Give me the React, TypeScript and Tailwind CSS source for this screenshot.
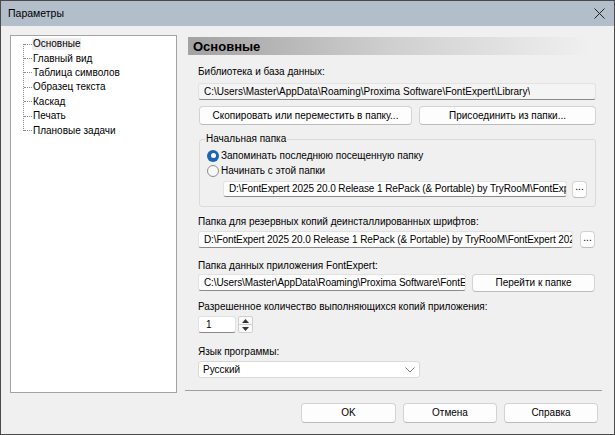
import React from "react";

const font = { fontFamily: '"Liberation Sans", Arial, sans-serif' };

function Btn({ children, className = "" }: { children: React.ReactNode; className?: string }) {
  return (
    <div
      className={
        "flex items-center justify-center rounded-[4px] border border-[#d3d3d3] border-b-[#bcbcbc] bg-[#fdfdfd] text-[10px] leading-none " +
        className
      }
    >
      {children}
    </div>
  );
}

function Field({ children, className = "" }: { children: React.ReactNode; className?: string }) {
  return (
    <div
      className={
        "flex items-center overflow-hidden whitespace-nowrap rounded-[3px] border border-[#e2e2e2] border-b-[#8a8a8a] pl-[5px] text-[10px] leading-none " +
        className
      }
    >
      <span className="overflow-hidden">{children}</span>
    </div>
  );
}

const treeItems = [
  "Основные",
  "Главный вид",
  "Таблица символов",
  "Образец текста",
  "Каскад",
  "Печать",
  "Плановые задачи",
];

export default function App() {
  return (
    <div
      className="flex h-[435px] w-[615px] flex-col border border-[#4a4a4a] bg-[#f0f0f0] text-[10px] text-black"
      style={font}
    >
      {/* title bar */}
      <div className="flex h-[25px] shrink-0 items-center justify-between bg-[#b2bec9] pl-[7px] pr-[9px]">
        <span className="text-[10.5px] leading-none">Параметры</span>
        <svg width="11" height="11" viewBox="0 0 11 11">
          <path d="M0.5 0.5 L10.5 10.5 M10.5 0.5 L0.5 10.5" stroke="#222" strokeWidth="1" />
        </svg>
      </div>

      <div className="flex flex-1">
        {/* tree */}
        <div className="relative ml-[9px] mt-[9px] h-[358px] w-[167px] border border-[#a3a3a3] bg-white pt-[1px]">
          <div className="absolute left-[12px] top-[8px] h-[87px] border-l border-dotted border-[#8a8a8a]" />
          <div className="flex flex-col">
            {treeItems.map((t, i) => (
              <div key={t} className="flex h-[14.4px] items-center">
                <span className="ml-[13px] w-[8px] border-t border-dotted border-[#8a8a8a]" />
                <span
                  className={
                    "px-[1px] text-[10px] leading-[12px] " + (i === 0 ? "bg-[#ededed]" : "")
                  }
                >
                  {t}
                </span>
              </div>
            ))}
          </div>
        </div>

        {/* right */}
        <div className="flex w-[436px] flex-col pl-[11px]">
          <div className="mt-[11px] flex h-[18px] w-[402px] items-center bg-gradient-to-r from-[#a2a2a2] via-[#cfcfcf] to-[#f0f0f0] pl-[5px] text-[13px] font-bold leading-none">
            Основные
          </div>

          <div className="flex w-[408px] flex-col pl-[10px]">
            <div className="mt-[9px] leading-[15px]">Библиотека и база данных:</div>
            <Field className="mt-[4px] h-[17px] w-[398px] bg-[#f4f4f4]">
              C:\Users\Master\AppData\Roaming\Proxima Software\FontExpert\Library\
            </Field>
            <div className="mt-[6px] flex h-[19px] gap-[7px] pl-[1px]">
              <Btn className="w-[213px]">Скопировать или переместить в папку...</Btn>
              <Btn className="w-[177px]">Присоединить из папки...</Btn>
            </div>

            {/* group */}
            <div className="relative ml-[1px] mt-[14px] h-[68px] w-[397px] rounded-[3px] border border-[#dadada]">
              <span className="absolute left-[5px] top-[-9px] bg-[#f0f0f0] px-[1px] leading-[15px]">
                Начальная папка
              </span>
              <div className="flex flex-col pl-[7px] pt-[8px]">
                <div className="flex h-[15px] items-center">
                  <span className="flex h-[12px] w-[12px] items-center justify-center rounded-full bg-[#1b64b7]">
                    <span className="h-[5px] w-[5px] rounded-full bg-white" />
                  </span>
                  <span className="ml-[2px] leading-none">Запоминать последнюю посещенную папку</span>
                </div>
                <div className="flex h-[15px] items-center">
                  <span className="h-[12px] w-[12px] rounded-full border border-[#8e8e8e] bg-[#f7f7f7]" />
                  <span className="ml-[2px] leading-none">Начинать с этой папки</span>
                </div>
                <div className="mt-[3px] flex h-[16px] items-center pl-[16px]">
                  <Field className="h-[16px] w-[344px] bg-[#fdfdfd] tracking-[-0.1px]">
                    D:\FontExpert 2025 20.0 Release 1 RePack (&amp; Portable) by TryRooM\FontExp
                  </Field>
                  <Btn className="ml-[5px] h-[17px] w-[15px] pb-[4px]">...</Btn>
                </div>
              </div>
            </div>

            <div className="mt-[7px] leading-[15px]">Папка для резервных копий деинсталлированных шрифтов:</div>
            <div className="mt-[2px] flex h-[17px] items-center">
              <Field className="h-[17px] w-[375px] bg-[#fdfdfd] tracking-[-0.1px]">
                D:\FontExpert 2025 20.0 Release 1 RePack (&amp; Portable) by TryRooM\FontExpert 202
              </Field>
              <Btn className="ml-[7px] h-[17px] w-[15px] pb-[4px]">...</Btn>
            </div>

            <div className="mt-[10px] leading-[15px]">Папка данных приложения FontExpert:</div>
            <div className="mt-[1px] flex h-[17px] items-center">
              <Field className="h-[17px] w-[268px] bg-[#fdfdfd] tracking-[-0.1px]">
                C:\Users\Master\AppData\Roaming\Proxima Software\FontE
              </Field>
              <Btn className="ml-[6px] h-[18px] w-[123px]">Перейти к папке</Btn>
            </div>

            <div className="mt-[8px] leading-[15px]">Разрешенное количество выполняющихся копий приложения:</div>
            <div className="mt-[2px] flex h-[17px] items-center">
              <Field className="h-[17px] w-[38px] bg-white pl-[7px]">1</Field>
              <div className="ml-[2px] flex h-[17px] w-[15px] flex-col overflow-hidden rounded-[2px] border border-[#d0d0d0] bg-[#fafafa]">
                <div className="flex flex-1 items-center justify-center border-b border-[#d0d0d0]">
                  <svg width="7" height="4" viewBox="0 0 7 4">
                    <path d="M3.5 0 L7 4 L0 4 Z" fill="#333" />
                  </svg>
                </div>
                <div className="flex flex-1 items-center justify-center">
                  <svg width="7" height="4" viewBox="0 0 7 4">
                    <path d="M0 0 L7 0 L3.5 4 Z" fill="#333" />
                  </svg>
                </div>
              </div>
            </div>

            <div className="mt-[11px] leading-[15px]">Язык программы:</div>
            <div className="mt-[2px] flex h-[17px] w-[222px] items-center justify-between rounded-[3px] border border-[#d9d9d9] bg-white pl-[4px] pr-[4px] leading-none">
              <span>Русский</span>
              <svg width="10" height="6" viewBox="0 0 10 6">
                <path d="M0.5 0.5 L5 5 L9.5 0.5" stroke="#777" strokeWidth="1" fill="none" />
              </svg>
            </div>
          </div>

          {/* separator + buttons */}
          <div className="ml-[-3px] mt-[12px] h-px w-[417px] bg-[#a0a0a0]" />
          <div className="mt-[12px] flex justify-end gap-[7px] pr-[15px]">
            <Btn className="h-[20px] w-[95px] border-[#6b9bd1] border-b-[#4f7fb8]">OK</Btn>
            <Btn className="h-[20px] w-[94px]">Отмена</Btn>
            <Btn className="h-[20px] w-[94px]">Справка</Btn>
          </div>
        </div>
      </div>
    </div>
  );
}
